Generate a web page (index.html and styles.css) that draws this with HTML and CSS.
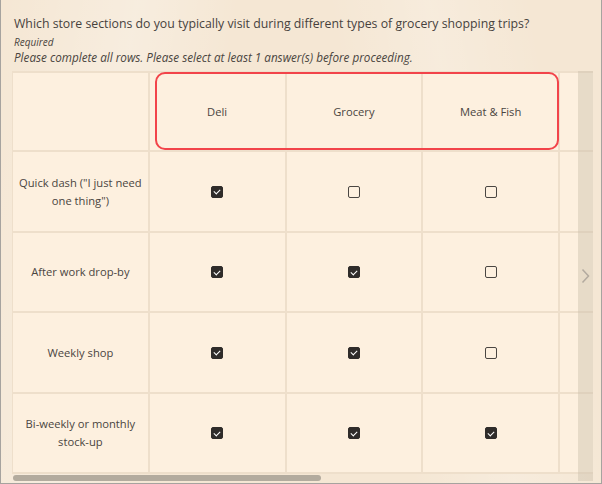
FILE: index.html
```html
<!DOCTYPE html>
<html>
<head>
<meta charset="utf-8">
<link rel="stylesheet" href="styles.css">
</head>
<body>
<div class="frame">
  <div class="question">Which store sections do you typically visit during different types of grocery shopping trips?</div>
  <div class="required">Required</div>
  <div class="hint">Please complete all rows. Please select at least 1 answer(s) before proceeding.</div>
  <div class="matrix-wrap">
    <div class="matrix">
      <div class="cell head"></div>
      <div class="cell head">Deli</div>
      <div class="cell head">Grocery</div>
      <div class="cell head">Meat &amp; Fish</div>
      <div class="cell head"></div>

      <div class="cell label">Quick dash ("I just need one thing")</div>
      <div class="cell"><span class="cb on"></span></div>
      <div class="cell"><span class="cb"></span></div>
      <div class="cell"><span class="cb"></span></div>
      <div class="cell"></div>

      <div class="cell label">After work drop-by</div>
      <div class="cell"><span class="cb on"></span></div>
      <div class="cell"><span class="cb on"></span></div>
      <div class="cell"><span class="cb"></span></div>
      <div class="cell"></div>

      <div class="cell label">Weekly shop</div>
      <div class="cell"><span class="cb on"></span></div>
      <div class="cell"><span class="cb on"></span></div>
      <div class="cell"><span class="cb"></span></div>
      <div class="cell"></div>

      <div class="cell label">Bi-weekly or monthly stock-up</div>
      <div class="cell"><span class="cb on"></span></div>
      <div class="cell"><span class="cb on"></span></div>
      <div class="cell"><span class="cb on"></span></div>
      <div class="cell"></div>
    </div>
    <div class="scrollbar"><div class="thumb"></div></div>
    <div class="highlight"></div>
    <div class="fade">
      <svg width="9" height="16" viewBox="0 0 9 16"><path d="M1.5 1.5 L7.5 8 L1.5 14.5" fill="none" stroke="#b3aa9f" stroke-width="1.5"/></svg>
    </div>
  </div>
</div>
</body>
</html>
```

FILE: styles.css
```css
* { box-sizing: border-box; }
html, body { margin: 0; padding: 0; }
body {
  font-family: "Open Sans", "Noto Sans", sans-serif;
  color: #4a4540;
}
.frame {
  width: 602px;
  height: 484px;
  border: 1px solid #a6a39f;
  border-top: none;
  background:
    linear-gradient(100deg, rgba(255,255,255,0) 0%, rgba(255,255,255,0.25) 20%, rgba(255,255,255,0) 35%),
    linear-gradient(80deg, rgba(255,255,255,0) 60%, rgba(255,255,255,0.2) 75%, rgba(255,255,255,0) 90%),
    #f5e7d4;
  padding: 15px 8px 0 11px;
  overflow: hidden;
}
.question {
  font-size: 12.3px;
  line-height: 18px;
  color: #47423d;
  padding-left: 2px;
}
.required {
  font-size: 10px;
  line-height: 14px;
  font-style: italic;
  margin-top: 2px;
  padding-left: 2px;
}
.hint {
  font-size: 11.7px;
  line-height: 16px;
  font-style: italic;
  padding-left: 2px;
}
.matrix-wrap {
  position: relative;
  margin-top: 6px;
  width: 581px;
  overflow: hidden;
}
.matrix {
  display: grid;
  grid-template-columns: repeat(5, 134.75px);
  grid-template-rows: 77px 79px 78px 79px 78px;
  gap: 2px;
  padding: 2px 0 2px 1px;
  background: #eedfcb;
  width: max-content;
}
.cell {
  background: #fdf0df;
  display: flex;
  align-items: center;
  justify-content: center;
  text-align: center;
  font-size: 11.2px;
  line-height: 18px;
  color: #4a4541;
  padding: 0 3px;
}
.cb {
  width: 12px;
  height: 12px;
  border: 1.5px solid #4a4642;
  border-radius: 2px;
  display: inline-block;
  position: relative;
}
.cb.on {
  background: #2f2c2a;
  border-color: #2f2c2a;
}
.cb.on::after {
  content: "";
  position: absolute;
  width: 5px;
  height: 3px;
  border-left: 1.5px solid #fff;
  border-bottom: 1.5px solid #fff;
  transform: rotate(-45deg);
  transform-origin: center;
  top: 2.5px;
  left: 2px;
}
.scrollbar {
  height: 7px;
  padding: 1px 0 0 1px;
}
.thumb {
  width: 308px;
  height: 6px;
  border-radius: 3px;
  background: #b3ab9e;
}
.highlight {
  position: absolute;
  left: 143px;
  top: 1px;
  width: 404px;
  height: 78px;
  border: 2.5px solid #f2444a;
  border-radius: 10px;
}
.fade {
  position: absolute;
  right: 0;
  top: 0;
  bottom: 0;
  width: 15px;
  background: rgba(205, 192, 172, 0.45);
  display: flex;
  align-items: center;
  justify-content: center;
}
```
